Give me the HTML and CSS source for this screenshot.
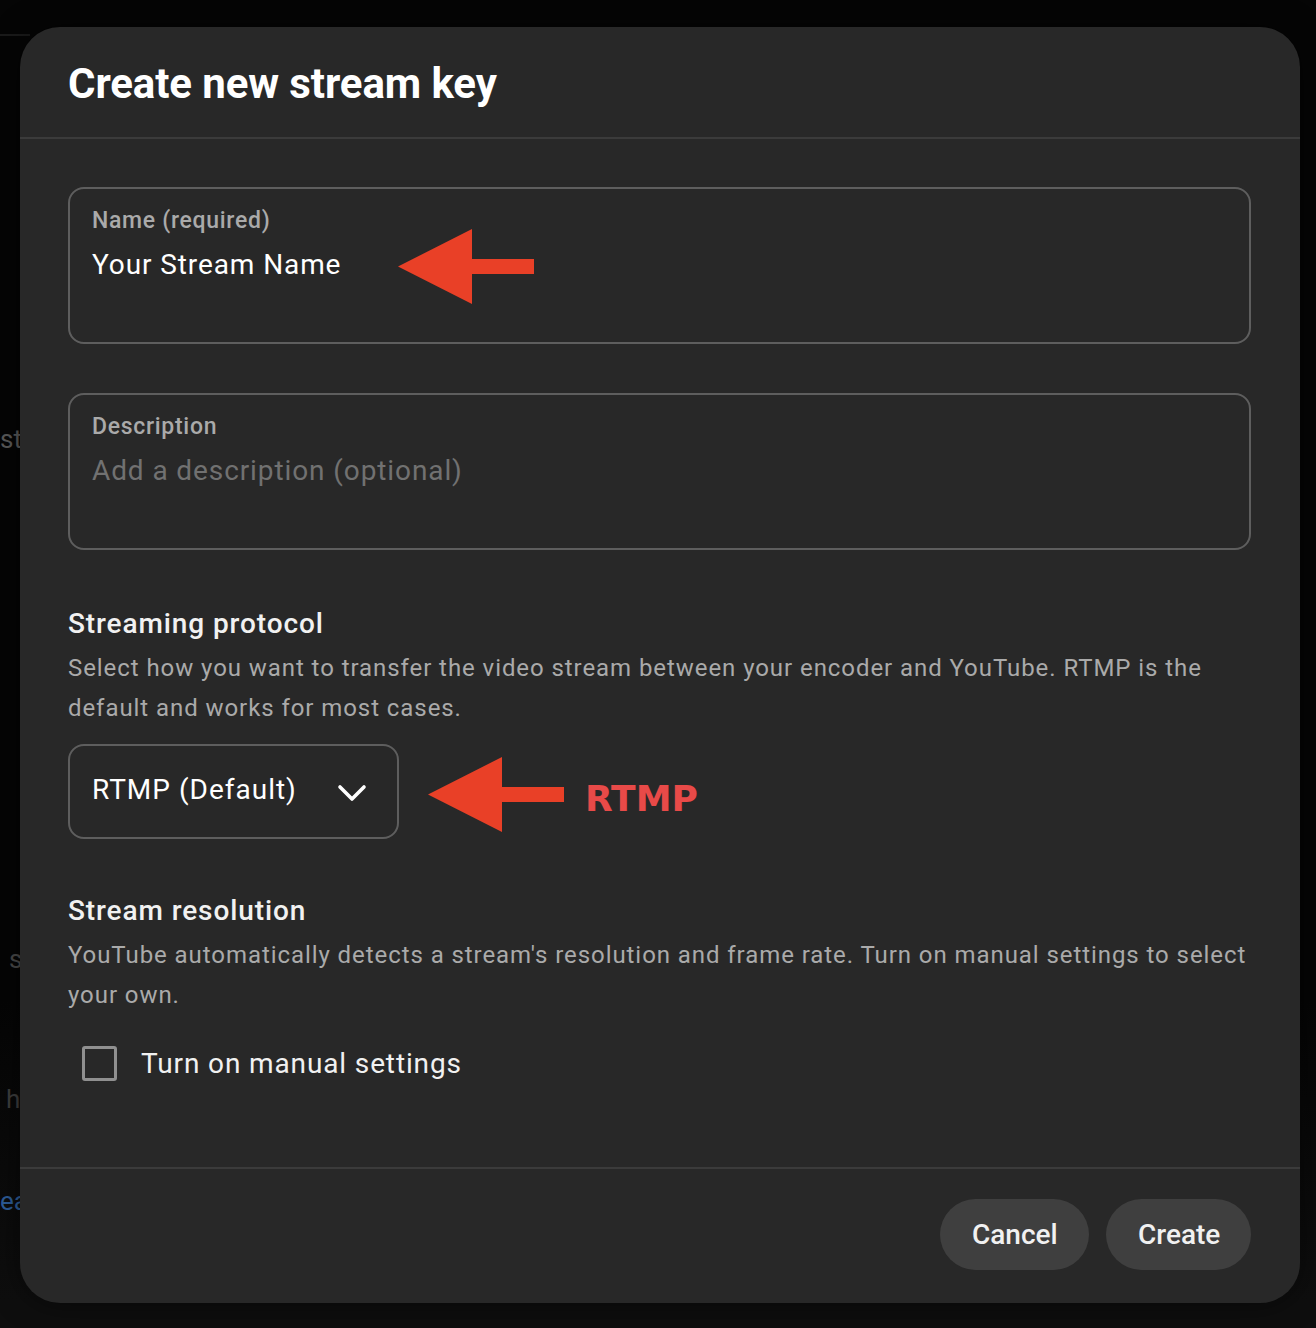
FILE: index.html
```html
<!DOCTYPE html>
<html>
<head>
<meta charset="utf-8">
<link rel="stylesheet" href="styles.css">
</head>
<body>
<div class="backdrop">
  <div class="bg-line bg-line-top"></div>
  <div class="bg-text bg-st">st</div>
  <div class="bg-text bg-rs">s</div>
  <div class="bg-text bg-h">h</div>
  <div class="bg-text bg-ea">ea</div>
</div>
<div class="dialog">
  <div class="dialog-header">
    <h1 class="title">Create new stream key</h1>
  </div>
  <div class="dialog-body">
    <div class="field field-name">
      <div class="field-label">Name (required)</div>
      <div class="field-value">Your Stream Name</div>
      <svg class="arrow arrow-name" width="136" height="75" viewBox="0 0 136 75"><polygon points="0,37.5 74,0 74,30 136,30 136,45 74,45 74,75" fill="#e94027"/></svg>
    </div>
    <div class="field field-desc">
      <div class="field-label">Description</div>
      <div class="field-value placeholder">Add a description (optional)</div>
    </div>

    <h2 class="section-title section-protocol">Streaming protocol</h2>
    <p class="section-desc">Select how you want to transfer the video stream between your encoder and YouTube. RTMP is the default and works for most cases.</p>
    <div class="protocol-row">
      <div class="select">
        <span class="select-text">RTMP (Default)</span>
        <svg class="chevron" width="30" height="20" viewBox="0 0 30 20"><polyline points="3,4 15,16 27,4" fill="none" stroke="#ffffff" stroke-width="3.6" stroke-linecap="round" stroke-linejoin="round"/></svg>
      </div>
      <svg class="arrow-inline" width="136" height="75" viewBox="0 0 136 75"><polygon points="0,37.5 74,0 74,30 136,30 136,45 74,45 74,75" fill="#e94027"/></svg>
      <span class="annot">RTMP</span>
    </div>

    <h2 class="section-title section-res">Stream resolution</h2>
    <p class="section-desc">YouTube automatically detects a stream's resolution and frame rate. Turn on manual settings to select your own.</p>
    <label class="check-row">
      <span class="checkbox"></span>
      <span class="check-label">Turn on manual settings</span>
    </label>
  </div>
  <div class="dialog-footer">
    <button class="btn btn-cancel">Cancel</button>
    <button class="btn btn-create">Create</button>
  </div>
</div>
</body>
</html>
```
FILE: styles.css
```css
* { box-sizing: border-box; }
html, body { margin: 0; padding: 0; }
body {
  width: 1316px;
  height: 1328px;
  background: #070707;
  font-family: Roboto, "Noto Sans", Arial, sans-serif;
  position: relative;
  overflow: hidden;
  padding-top: 27px;
  padding-left: 20px;
}
.backdrop { position: absolute; inset: 0; background: linear-gradient(#050505 0, #050505 1000px, #0e0e0e 1300px); }
.bg-line { position: absolute; height: 2px; background: #1a1a1a; }
.bg-line-top { top: 34px; left: 0; width: 30px; }
.bg-text { position: absolute; font-size: 26px; color: #5a5a5a; }
.bg-st { left: 0; top: 424px; }
.bg-rs { left: 9px; top: 944px; color: #4a4a4a; }
.bg-h { left: 6px; top: 1084px; color: #3e3e3e; }
.bg-ea { left: 0; top: 1186px; color: #2e5d99; }

.dialog {
  position: relative;
  width: 1280px;
  height: 1276px;
  background: #282828;
  border-radius: 40px;
  display: flex;
  flex-direction: column;
  box-shadow: 0 0 30px rgba(0,0,0,0.5);
}
.dialog-header {
  height: 112px;
  padding-left: 48px;
  border-bottom: 2px solid #3b3b3b;
  display: flex;
  align-items: flex-start;
}
.title {
  margin: 29px 0 0;
  font-size: 42px;
  line-height: 56px;
  font-weight: 700;
  color: #ffffff;
  letter-spacing: -0.1px;
}
.dialog-body {
  flex: 1;
  padding: 48px 49px 0 48px;
  display: flex;
  flex-direction: column;
  align-items: flex-start;
}
.field {
  position: relative;
  width: 100%;
  height: 157px;
  border: 2px solid #5e5e5e;
  border-radius: 16px;
  padding: 18px 22px 0;
}
.field-desc { margin-top: 49px; }
.field-label {
  font-size: 23px;
  line-height: 28px;
  font-weight: 500;
  color: #aaaaaa;
  letter-spacing: 0.7px;
}
.field-value {
  margin-top: 12px;
  font-size: 28px;
  line-height: 36px;
  color: #ffffff;
  letter-spacing: 0.9px;
}
.placeholder { color: #717171; }
.arrow { position: absolute; }
.arrow-name { left: 328px; top: 40px; }

.section-title {
  margin: 0;
  font-size: 28px;
  line-height: 36px;
  font-weight: 500;
  color: #f1f1f1;
  letter-spacing: 0.9px;
}
.section-protocol { margin-top: 56px; }
.section-res { margin-top: 54px; }
.section-desc {
  margin: 6px 0 0;
  font-size: 24px;
  line-height: 40px;
  color: #aaaaaa;
  letter-spacing: 0.93px;
}
.protocol-row {
  margin-top: 16px;
  display: flex;
  align-items: center;
}
.select {
  width: 331px;
  height: 95px;
  border: 2px solid #5e5e5e;
  border-radius: 16px;
  padding: 0 30px 0 22px;
  display: flex;
  align-items: center;
  justify-content: space-between;
}
.select-text { font-size: 28px; color: #ffffff; margin-top: -4px; letter-spacing: 1px; }
.chevron { margin-top: 2px; }
.arrow-inline { margin-left: 29px; margin-top: 6px; }
.annot {
  margin-left: 21px;
  margin-top: 14px;
  font-family: "DejaVu Sans", Verdana, sans-serif;
  font-weight: 700;
  font-size: 36px;
  color: #e84a48;
}
.check-row {
  margin-top: 31px;
  margin-left: 14px;
  display: flex;
  align-items: center;
}
.checkbox {
  width: 35px;
  height: 35px;
  border: 3px solid #909090;
  border-radius: 3px;
}
.check-label {
  margin-left: 24px;
  font-size: 28px;
  color: #f1f1f1;
  letter-spacing: 0.87px;
}
.dialog-footer {
  height: 136px;
  border-top: 2px solid #3b3b3b;
  padding: 30px 49px 0 0;
  display: flex;
  justify-content: flex-end;
  align-items: flex-start;
  gap: 17px;
}
.btn {
  height: 71px;
  border: none;
  border-radius: 36px;
  background: #3f3f3f;
  color: #f1f1f1;
  font-family: Roboto, Arial, sans-serif;
  font-size: 28px;
  font-weight: 500;
  padding: 0 32px;
}
.btn-cancel { width: 149px; }
.btn-create { width: 145px; }
```
